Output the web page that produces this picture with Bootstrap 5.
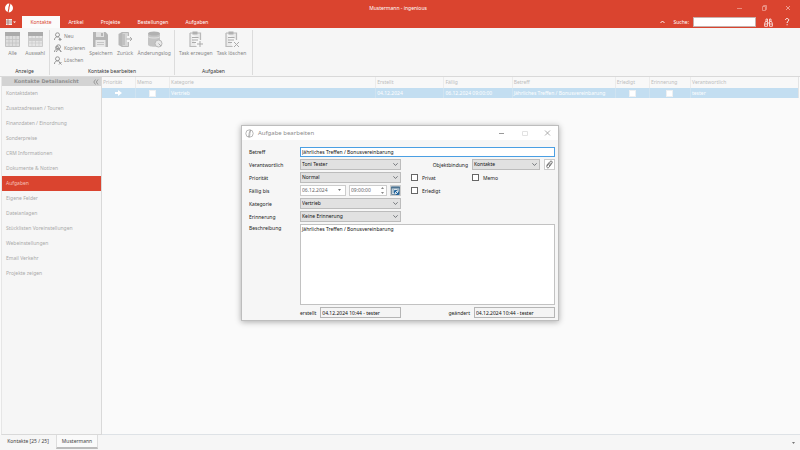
<!DOCTYPE html>
<html lang="de">
<head>
<meta charset="utf-8">
<meta name="viewport" content="width=device-width, initial-scale=1">
<title>Mustermann - ingenious</title>
<link href="https://cdn.jsdelivr.net/npm/bootstrap@5.3.0/dist/css/bootstrap.min.css" rel="stylesheet">
<style>
:root{--red:#da442f;--panel:#f6f6f6;--line:#d9d9d9}
body{font:5px/8px "Noto Sans","Open Sans",sans-serif;background:#fafafa;color:#444}
svg{display:block;flex:none}
button{font:inherit;color:inherit;border:0;background:none;padding:0;line-height:inherit}
a{text-decoration:none;color:inherit}
.head{background:var(--red);color:#fff}
.titlebar{height:16px;display:grid;grid-template-columns:1fr auto 1fr;align-items:center;padding:0 8px 0 4px}
.wins{gap:16px;color:#ee9d92}
.dlghead .wins{color:#999}
.tabs{height:12px}
.tabs .nav-link{padding:2px 0;text-align:center;color:#fff;border-radius:0;line-height:8px;height:12px}
.tabs .nav-link.active{background:#fbfbfb;color:var(--red)}
.t0{width:22px;padding-left:6px}.t1{width:38px}.t2{width:32px}.t3{width:37px}.t4{width:48px}.t5{width:40px}
.find{width:63px;height:10px;border:1px solid #c8b0ac;border-radius:0;padding:0 2px;font-size:5px;background:#fff}
.ribbon{height:49px;background:var(--panel);border-bottom:1px solid var(--line);padding-top:2px}
.rgroup{border-right:1px solid #dcdcdc;height:45px}
.rgroup .cap{color:#333;text-align:center;line-height:8px}
.g1{width:50px}.g2{width:125px}.g3{width:78px}
.tools{height:37px;color:#858585}
.big{display:flex;flex-direction:column;align-items:center;white-space:nowrap;line-height:8px;gap:1px;align-self:flex-start}
.big svg{opacity:.8}
.mini{display:flex;align-items:center;gap:2px;height:12px;white-space:nowrap}
.side{width:101px;margin-left:1px;background:var(--panel);border:1px solid var(--line);border-top:0;border-left-color:#e6e6e6}
.sidehead{height:9px;background:#d3d3d3;color:#8f8f8f;font:bold 5px/9px "DejaVu Sans",sans-serif;padding:0 2px 0 12px}
.side a{display:block;height:15px;line-height:15px;padding-left:4px;color:#a9a9a9}
.side a.on{background:var(--red);color:#f6c0b8}
.tasks{table-layout:fixed;width:calc(100% - 1px);margin:0;color:#bdbdbd;border-right:1px solid #e4e4e4}
.tasks th,.tasks td{padding:0 1px;white-space:nowrap;font-weight:400;border-left:1px solid #ececec;overflow:hidden}
.tasks th{height:11px;line-height:11px;background:#f8f8f8}
.tasks td{height:10px;line-height:10px;background:#c3def1;color:#fff;border-left-color:#cfe3f1}
.tasks th:first-child,.tasks td:first-child{border-left:0}
.tick{appearance:none;display:block;width:7px;height:7px;margin:0;background:#fff;border:1px solid #666;border-radius:0;flex:none}
.tasks .tick{border-color:#eef0f2;margin:0 auto}
.foot{height:15px;background:var(--panel)}
.foot a{line-height:13px;height:14px;text-align:center}
.foot .on{background:#fafafa;border:1px solid #ddd;border-top:0;border-bottom:2px solid #bcbcbc}
.f1{width:56px}.f2{width:42px}
.dlg{top:125px;width:318px;background:var(--panel);border:1px solid #bdbdbd;box-shadow:0 1px 6px rgba(0,0,0,.32);color:#222}
.dlghead{height:14px;background:#fff;color:#8c8c8c;padding:0 7px 0 3px}
.dlghead span{font-size:6px}
.dlgbody{padding:7px 3px 2px 7px}
.frm{display:grid;grid-template-columns:51px 101px 10px 61px 1fr;row-gap:2px;align-items:center}
.frm label,.stamps label{line-height:8px}
.fld{font:inherit;color:#111;border:1px solid #c2c2c2;border-radius:0;padding:0 1px;height:11px;min-height:0;line-height:9px;background-color:#fff}
.fld:focus{box-shadow:none}
.hot{border-color:#4a9fe3;height:10px}
.drop{background-color:#e1e1e1;border-color:#bcbcbc;background-size:5px 5px;background-position:right 2px center}
.c25{grid-column:2/6}
.objlabel{grid-column:4}
textarea.fld{height:81px;resize:none;line-height:8px}
.stamps{padding:2px 0 0 51px}
.stamp{width:81px;background:#f4f4f4;border-color:#b5b5b5}
.spin{border:1px solid #ccc;background:#fff;height:11px}
.spin input{border:0;padding:0 0 0 1px;font:inherit;line-height:9px;height:9px;width:100%;min-width:0;color:#666;background:none;outline:0}
.d1{width:46px}.d2{width:38px}
.ic{width:11px;height:11px;border:1px solid #ccc;background:#fff;flex:none}
</style>
</head>
<body class="d-flex flex-column min-vh-100">
<header class="head">
  <div class="titlebar">
    <svg width="10" height="10" viewBox="0 0 10 10"><ellipse cx="5" cy="5" rx="4" ry="4.4" fill="#fff"/><path d="M6.1 0 4.9 4.6v.9L3.9 10" stroke="#da442f" stroke-width="1.1" fill="none"/></svg>
    <span>Mustermann - ingenious</span>
    <div class="wins d-flex justify-content-end align-items-center">
      <button aria-label="Minimieren"><svg width="8" height="8"><path d="M1 4.5h5" stroke="currentColor" stroke-width=".8"/></svg></button>
      <button aria-label="Wiederherstellen"><svg width="8" height="8"><path d="M2.5 2.5h3v4h-3zM3.5 2.5v-1h3v4h-1" fill="none" stroke="currentColor" stroke-width=".8"/></svg></button>
      <button aria-label="Schließen"><svg width="8" height="8"><path d="m2 2 4 4m0-4-4 4" stroke="currentColor"/></svg></button>
    </div>
  </div>
  <div class="d-flex justify-content-between">
    <nav class="nav tabs">
      <button class="t0 d-flex align-items-center" aria-label="Menü"><svg width="11" height="8" viewBox="0 0 11 8"><path d="M0 1h6v6H0z" fill="#f7e9e7"/><path d="M0 3h6M0 5h6M2 1v6" stroke="#9a6a63" stroke-width=".7"/><path d="M7 3.500h3L8.500 5z" fill="#fff"/></svg></button>
      <a class="nav-link active t1" href="#">Kontakte</a><a class="nav-link t2" href="#">Artikel</a><a class="nav-link t3" href="#">Projekte</a><a class="nav-link t4" href="#">Bestellungen</a><a class="nav-link t5" href="#">Aufgaben</a>
    </nav>
    <div class="d-flex align-items-center pe-1">
      <button class="me-1" aria-label="Menüband einklappen"><svg width="11" height="8"><path d="m1.500 5 2-2 2 2" fill="none" stroke="#fff" stroke-width=".9"/></svg></button>
      <label class="me-1" for="q">Suche:</label><input id="q" class="find" type="search">
      <button class="ms-2" aria-label="Suchen"><svg width="9" height="9" viewBox="0 0 9 9" fill="none" stroke="#fbe0dc" stroke-width=".9"><path d="M1.500 3.500h2v4.800H.6V5.500zM7.500 3.500h-2v4.800h2.900V5.500zM3.500 5h2M2 3.500V1h1.500v2.500M5.500 3.500V1H7v2.500M.6 6h2.900m2 0h2.900"/></svg></button>
      <button class="ms-2 me-1" aria-label="Hilfe"><svg width="11" height="10" viewBox="0 0 11 10"><path d="M4.500 3c0-2 3.200-2 3.200 0C7.700 4.300 6.100 4.300 6.100 6" fill="none" stroke="#fff"/><path d="M5.600 7.200h1v1h-1z" fill="#fff"/></svg></button>
    </div>
  </div>
</header>

<section class="ribbon d-flex" aria-label="Menüband">
  <div class="rgroup g1"><div class="tools d-flex justify-content-between px-1">
    <button class="big"><svg width="17" height="18" viewBox="0 0 17 18"><path d="M1.500 2.500h14v14h-14z" fill="#d7d7d7" stroke="#b4b4b4"/><path d="M1 2h15v4H1z" fill="#999"/><path d="M1 9.500h15M1 13h15M5 6v10M8.500 6v10M12 6v10" stroke="#b5b5b5" stroke-width=".7"/></svg>Alle</button>
    <button class="big"><svg width="17" height="18" viewBox="0 0 17 18"><path d="M1.500 2.500h14v14h-14z" fill="#e2e2e2" stroke="#c2c2c2"/><path d="M1 2h15v4H1z" fill="#999"/><path d="M1 8h15v3H1z" fill="#c4c4c4"/><path d="M1 13h15M5 6v10M8.500 6v10M12 6v10" stroke="#c0c0c0" stroke-width=".7"/></svg>Auswahl</button>
  </div><div class="cap">Anzeige</div></div>

  <div class="rgroup g2"><div class="tools d-flex gap-1 ps-1">
    <div>
      <button class="mini"><svg width="8" height="9" viewBox="0 0 8 9" fill="none" stroke="#969696"><circle cx="3.500" cy="2.800" r="2"/><path d="M.5 8c0-4 5-4 5.500-1M6 6v3M4.600 7.500h3"/></svg>Neu</button>
      <button class="mini"><svg width="8" height="9" viewBox="0 0 8 9" fill="none" stroke="#969696"><circle cx="4.500" cy="2.800" r="2"/><circle cx="3" cy="3.600" r="1.500"/><path d="M.5 8c0-4 6-4 6.500 0M2.500 8c0-3 4-3 4.500 0"/></svg>Kopieren</button>
      <button class="mini"><svg width="8" height="9" viewBox="0 0 8 9" fill="none" stroke="#969696"><circle cx="3.500" cy="2.800" r="2"/><path d="M.5 8c0-4 5-4 5.500-1M5 6l2.500 2.500M7.500 6 5 8.500"/></svg>Löschen</button>
    </div>
    <button class="big"><svg width="17" height="18" viewBox="0 0 17 18"><path d="M1 2h12.500L16 4.500V17H1z" fill="#a6a6a6"/><path d="M4 2h8v5H4z" fill="#dcdcdc"/><path d="M9 3h2v3H9z" fill="#a6a6a6"/><path d="M3.500 10h10v7h-10z" fill="#e6e6e6"/><path d="M5 12.500h7M5 14.500h7" stroke="#bbb"/></svg>Speichern</button>
    <button class="big"><svg width="17" height="18" viewBox="0 0 17 18"><path d="M1.500 4 5 2v15l-3.500-2z" fill="#a9a9a9"/><path d="M5 2.500h6.500v14H5z" fill="#cfcfcf" stroke="#a9a9a9"/><path d="M5 4h3v11H5z" fill="#b4b4b4"/><path d="M10 6h4v6h-4z" fill="#f6f6f6"/><path d="M9.500 9H15M13 7l2 2-2 2" stroke="#999" fill="none"/></svg>Zurück</button>
    <button class="big"><svg width="17" height="18" viewBox="0 0 17 18"><path d="M2 3.500v11c0 3 12 3 12 0v-11" fill="#b8b8b8"/><ellipse cx="8" cy="3.500" rx="6" ry="2" fill="#a0a0a0"/><path d="M2 6.500c1 2 11 2 12 0" fill="none" stroke="#ddd"/><circle cx="12.500" cy="13.500" r="3.500" fill="#e6e6e6" stroke="#aaa"/><path d="M12.500 13.500 15 16" stroke="#999"/></svg>Änderungslog</button>
  </div><div class="cap">Kontakte bearbeiten</div></div>

  <div class="rgroup g3"><div class="tools d-flex gap-1 ps-1">
    <button class="big"><svg width="17" height="18" viewBox="0 0 17 18"><path d="M3 3h10.500v7M9.500 16.500H3V3" fill="#e8e8e8" stroke="#aaa" stroke-width="1.200"/><path d="M5.500 1.500h5v3h-5z" fill="#a0a0a0"/><path d="M5 7.500h6.500M5 10h6M5 12.500h4" stroke="#999"/><path d="M13 11v6m-3-3h6" stroke="#999"/></svg>Task erzeugen</button>
    <button class="big"><svg width="17" height="18" viewBox="0 0 17 18"><path d="M3 3h10.500v7M9.500 16.500H3V3" fill="#e8e8e8" stroke="#aaa" stroke-width="1.200"/><path d="M5.500 1.500h5v3h-5z" fill="#a0a0a0"/><path d="M5 7.500h6.500M5 10h6M5 12.500h4" stroke="#999"/><path d="m11 12 5 5m0-5-5 5" stroke="#999"/></svg>Task löschen</button>
  </div><div class="cap">Aufgaben</div></div>
</section>

<main class="d-flex flex-grow-1">
  <aside class="side flex-shrink-0">
    <div class="sidehead d-flex justify-content-between align-items-center"><span>Kontakte Detailansicht</span><svg width="6" height="6"><path d="M2.500.5.800 3l1.700 2.500M5 .5 3.300 3 5 5.500" fill="none" stroke="#888" stroke-width=".8"/></svg></div>
    <nav>
      <a href="#">Kontaktdaten</a><a href="#">Zusatzadressen / Touren</a><a href="#">Finanzdaten / Einordnung</a><a href="#">Sonderpreise</a><a href="#">CRM Informationen</a><a href="#">Dokumente &amp; Notizen</a><a href="#" class="on">Aufgaben</a><a href="#">Eigene Felder</a><a href="#">Dateianlagen</a><a href="#">Stücklisten Voreinstellungen</a><a href="#">Webeinstellungen</a><a href="#">Email Verkehr</a><a href="#">Projekte zeigen</a>
    </nav>
  </aside>
  <div class="flex-grow-1 border-bottom">
    <table class="tasks">
      <colgroup><col style="width:4.8%"><col style="width:4.9%"><col style="width:29.6%"><col style="width:9.8%"><col style="width:9.8%"><col style="width:14.8%"><col style="width:4.9%"><col style="width:5.9%"><col></colgroup>
      <thead><tr><th>Priorität</th><th>Memo</th><th>Kategorie</th><th>Erstellt</th><th>Fällig</th><th>Betreff</th><th>Erledigt</th><th>Erinnerung</th><th>Verantwortlich</th></tr></thead>
      <tbody><tr><td><svg class="mx-auto" width="8" height="6"><path d="M1 2h3V0l4 3-4 3V4H1z" fill="#fff"/></svg></td><td><input class="tick" type="checkbox" aria-label="Memo"></td><td>Vertrieb</td><td>04.12.2024</td><td>06.12.2024 09:00:00</td><td>Jährliches Treffen / Bonusvereinbarung</td><td><input class="tick" type="checkbox" aria-label="Erledigt"></td><td><input class="tick" type="checkbox" aria-label="Erinnerung"></td><td>tester</td></tr></tbody>
    </table>
  </div>
</main>

<footer class="foot d-flex align-items-start">
  <a class="f1" href="#">Kontakte [25 / 25]</a><a class="f2 on" href="#">Mustermann</a>
  <button class="ms-auto me-1 mt-1" aria-label="Tabs"><svg width="4" height="6"><path d="M0 3h3L1.500 5z" fill="#777"/></svg></button>
</footer>

<div class="dlg position-absolute start-50 translate-middle-x" role="dialog" aria-label="Aufgabe bearbeiten">
  <div class="dlghead d-flex align-items-center gap-1">
    <svg width="9" height="9" viewBox="0 0 9 9" fill="none" stroke="#999" stroke-width=".7"><circle cx="4.500" cy="4.500" r="3.700"/><path d="M5.300.8 4.100 4.300v.9L3.500 8.200M5.700 1 4.900 4.500v1L4.300 8.200"/></svg>
    <span>Aufgabe bearbeiten</span>
    <div class="wins d-flex ms-auto">
      <button aria-label="Minimieren"><svg width="7" height="8"><path d="M1 4.500h5" stroke="currentColor"/></svg></button>
      <button aria-label="Maximieren"><svg width="7" height="8"><path d="M1.500 2.500h5v4h-5z" fill="none" stroke="#e2e2e2"/></svg></button>
      <button aria-label="Schließen"><svg width="7" height="8"><path d="m1 1.500 5 5m0-5-5 5" stroke="currentColor" stroke-width=".8"/></svg></button>
    </div>
  </div>
  <form class="dlgbody">
    <div class="frm">
      <label for="b">Betreff</label><input id="b" class="form-control fld hot c25" value="Jährliches Treffen / Bonusvereinbarung">
      <label for="v">Verantwortlich</label><select id="v" class="form-select fld drop"><option>Toni Tester</option></select><label class="text-end pe-1 objlabel" for="o">Objektbindung</label><div class="d-flex gap-1"><select id="o" class="form-select fld drop"><option>Kontakte</option></select><button type="button" class="ic" aria-label="Anhang"><svg width="9" height="9" viewBox="0 0 9 9"><path d="M1.500 5.500 5 1.500c1.200-1.200 3 0 2 1.500L4 7.300C3 8.500 1 7.500 2 6l3-3.500M4 6l2-2.700" fill="none" stroke="#666" stroke-width=".9"/></svg></button></div>
      <label for="p">Priorität</label><select id="p" class="form-select fld drop"><option>Normal</option></select><span></span><div class="d-flex align-items-center gap-1"><input class="tick" type="checkbox" id="pr"><label for="pr">Privat</label></div><div class="d-flex align-items-center gap-1"><input class="tick" type="checkbox" id="me"><label for="me">Memo</label></div>
      <label for="d">Fällig bis</label><div class="d-flex justify-content-between"><div class="spin d1 d-flex align-items-center"><input id="d" value="06.12.2024"><svg class="me-1" width="3" height="3"><path d="M0 0h3L1.500 2z" fill="#777"/></svg></div><div class="spin d2 d-flex align-items-center"><input aria-label="Uhrzeit" value="09:00:00"><svg width="5" height="7"><path d="M0 2 1.500 0 3 2zM0 5l1.500 2L3 5z" fill="#888"/></svg></div><button type="button" class="ic" aria-label="Kalender"><svg width="9" height="9" viewBox="0 0 9 9"><path d="M.5 1h8v7.500h-8z" fill="#d5e0e8" stroke="#57758c" stroke-width=".8"/><path d="M0 .5h9v2H0z" fill="#4d7391"/><path d="M1.500 4H3M1.500 6H3M6 4h2" stroke="#7090a8"/><path d="M3.500 7.500V4.500h2.500M4 5l3.500 3.500M7.500 5.500v3H5" stroke="#2467a0" fill="none"/></svg></button></div><span></span><div class="d-flex align-items-center gap-1"><input class="tick" type="checkbox" id="er"><label for="er">Erledigt</label></div><span></span>
      <label for="k">Kategorie</label><select id="k" class="form-select fld drop"><option>Vertrieb</option></select><span></span><span></span><span></span>
      <label for="e">Erinnerung</label><select id="e" class="form-select fld drop"><option>Keine Erinnerung</option></select><span></span><span></span><span></span>
      <label class="align-self-start" for="t">Beschreibung</label><textarea id="t" class="form-control fld c25">Jährliches Treffen / Bonusvereinbarung</textarea>
    </div>
    <div class="stamps d-flex align-items-center justify-content-between">
      <div class="d-flex align-items-center gap-1"><label for="s1">erstellt</label><input id="s1" class="form-control fld stamp" readonly value="04.12.2024 10:44 - tester"></div>
      <div class="d-flex align-items-center gap-1"><label for="s2">geändert</label><input id="s2" class="form-control fld stamp" readonly value="04.12.2024 10:44 - tester"></div>
    </div>
  </form>
</div>
<script src="https://cdn.jsdelivr.net/npm/bootstrap@5.3.0/dist/js/bootstrap.bundle.min.js"></script>
</body>
</html>
